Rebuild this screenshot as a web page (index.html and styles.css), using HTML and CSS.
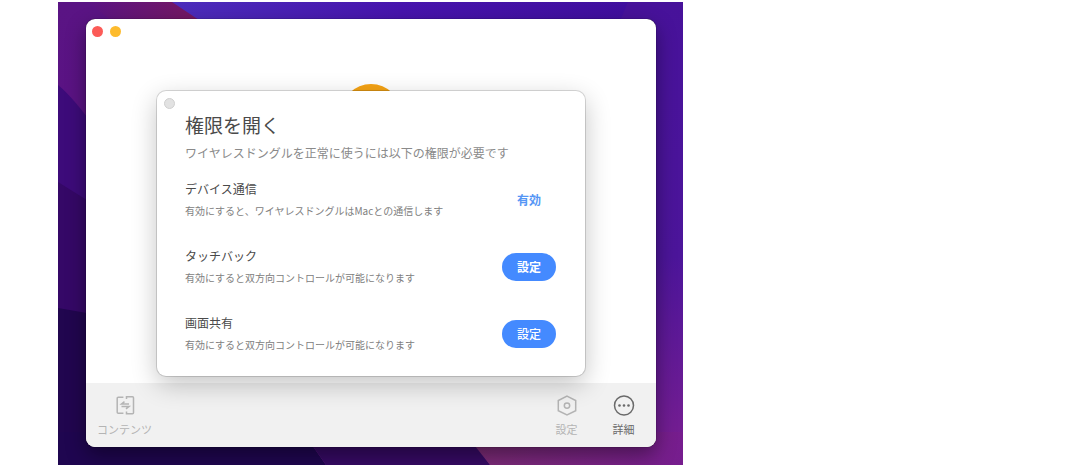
FILE: index.html
```html
<!DOCTYPE html>
<html lang="ja">
<head>
  <meta charset="UTF-8">
  <meta name="viewport" content="width=device-width, initial-scale=1.0">
  <title>権限を開く</title>
  <link rel="stylesheet" href="styles.css">
</head>
<body>
  <div class="desktop">
    <!-- Wallpaper -->
    <svg class="wallpaper" viewBox="0 0 625 463" preserveAspectRatio="none" aria-hidden="true">
      <defs>
        <linearGradient id="right" x1="0" y1="0" x2="0" y2="1">
          <stop offset="0" stop-color="#47129a"/>
          <stop offset="0.55" stop-color="#4c159a"/>
          <stop offset="1" stop-color="#7a1f90"/>
        </linearGradient>
        <linearGradient id="left" x1="0" y1="0" x2="0" y2="1">
          <stop offset="0" stop-color="#5a1484"/>
          <stop offset="1" stop-color="#5a0f80"/>
        </linearGradient>
        <linearGradient id="crimson" x1="0" y1="0" x2="1" y2="0">
          <stop offset="0" stop-color="#5a1484"/>
          <stop offset="1" stop-color="#78185e"/>
        </linearGradient>
        <linearGradient id="blue" x1="0" y1="0" x2="1" y2="0">
          <stop offset="0" stop-color="#4c2dbb"/>
          <stop offset="0.5" stop-color="#4714ad"/>
          <stop offset="1" stop-color="#400f9e"/>
        </linearGradient>
        <linearGradient id="pink" x1="0" y1="0" x2="1" y2="0">
          <stop offset="0" stop-color="#7c2c74"/>
          <stop offset="1" stop-color="#761d8e"/>
        </linearGradient>
      </defs>
      <rect width="625" height="463" fill="url(#right)"/>
      <path d="M0 0h160v463H0z" fill="url(#left)"/>
      <path d="M30 0h90l30 24H60z" fill="url(#crimson)"/>
      <path d="M114 0h456l-10 24H150z" fill="url(#blue)"/>
      <path d="M0 83Q16 96 40 130V463H0z" fill="#3d0b7a"/>
      <path d="M0 180L40 205V463H0z" fill="#350867"/>
      <path d="M0 306L40 313V463H0z" fill="#21064f"/>
      <path d="M0 430H245L268 463H0z" fill="#1f0650"/>
      <path d="M245 430H410L432 463H268z" fill="#360a64"/>
      <path d="M406 430H625V463H432z" fill="url(#pink)"/>
    </svg>

    <div class="window">
      <div class="titlebar">
        <button class="dot red" aria-label="閉じる"></button>
        <button class="dot yellow" aria-label="しまう"></button>
      </div>

      <main class="stage">
        <div class="avatar"></div>

        <section class="dialog">
          <button class="dot grey" aria-label="閉じる"></button>
          <h1>権限を開く</h1>
          <p class="lead">ワイヤレスドングルを正常に使うには以下の権限が必要です</p>

          <div class="permission">
            <div class="info">
              <h2>デバイス通信</h2>
              <p>有効にすると、ワイヤレスドングルはMacとの通信します</p>
            </div>
            <span class="status">有効</span>
          </div>
          <div class="permission">
            <div class="info">
              <h2>タッチバック</h2>
              <p>有効にすると双方向コントロールが可能になります</p>
            </div>
            <button class="set strong">設定</button>
          </div>
          <div class="permission">
            <div class="info">
              <h2>画面共有</h2>
              <p>有効にすると双方向コントロールが可能になります</p>
            </div>
            <button class="set">設定</button>
          </div>
        </section>
      </main>

      <footer class="toolbar">
        <button class="tool">
          <svg viewBox="0 0 20 20" aria-hidden="true">
            <path d="M8.4 2.2H3.2a1 1 0 0 0-1 1v14.1a1 1 0 0 0 1 1h5.2M11.5 4V1.8h6a1 1 0 0 1 1 1v15a1 1 0 0 1-1 1h-6v-2.2"/>
            <path d="M14 9H6.5l3-2.4M6.5 11.4H14l-3 2.4"/>
          </svg>
          コンテンツ
        </button>
        <button class="tool push">
          <svg viewBox="0 0 20 20" aria-hidden="true">
            <path d="M10 1.2l8.7 4.3v10.2L10 20l-8.7-4.3V5.5z"/>
            <circle cx="10" cy="10.6" r="2.7"/>
          </svg>
          設定
        </button>
        <button class="tool dark">
          <svg viewBox="0 0 20 20" aria-hidden="true">
            <circle cx="10" cy="10.5" r="9.5"/>
            <g class="solid">
              <circle cx="5.5" cy="10.5" r="1.3"/>
              <circle cx="10" cy="10.5" r="1.3"/>
              <circle cx="14.5" cy="10.5" r="1.3"/>
            </g>
          </svg>
          詳細
        </button>
      </footer>
    </div>
  </div>
</body>
</html>
```

FILE: styles.css
```css
* {
  box-sizing: border-box;
}
body {
  margin: 0;
  padding: 2px 58px;
  background: #fff;
  font-family: "Noto Sans CJK JP", sans-serif;
  color: #4a4a4a;
}
h1, h2, p {
  margin: 0;
  font-weight: 400;
}
button {
  padding: 0;
  border: 0;
  background: none;
  font-family: inherit;
}

.desktop {
  position: relative;
  max-width: 625px;
  padding: 17px 27px 18px 28px;
  overflow: hidden;
}
.wallpaper {
  position: absolute;
  inset: 0;
  width: 100%;
  height: 100%;
}

/* App window */
.window {
  position: relative;
  border-radius: 9px;
  background: #fff;
  box-shadow: 0 0 1px #000, 0 8px 20px rgba(0, 0, 0, 0.4);
}
.titlebar {
  display: flex;
  gap: 7px;
  padding: 7px 6px 0;
}
.dot {
  display: block;
  width: 11px;
  height: 11px;
  border-radius: 50%;
}
.red {
  background: #fc5b57;
}
.yellow {
  background: #fdbb2d;
}
.grey {
  border: 1px solid #d0d0d0;
  background: #e2e2e2;
}

/* Above the toolbar so the dialog shadow falls on it */
.stage {
  position: relative;
  z-index: 1;
  padding: 54px 16px 7px;
}
.avatar {
  position: absolute;
  top: 47px;
  left: 50%;
  width: 60px;
  height: 60px;
  margin-left: -30px;
  border-radius: 50%;
  background: #f5a314;
}

/* Permission dialog */
.dialog {
  position: relative;
  max-width: 428px;
  margin: 0 auto;
  padding: 7px 7px 9px;
  border-radius: 9px;
  background: #fff;
  box-shadow: 0 0 0 1px rgba(0, 0, 0, 0.14), 0 8px 26px rgba(0, 0, 0, 0.24);
}
.dialog h1 {
  margin: 2px 21px 0;
  font-size: 19px;
  line-height: 28px;
}
.lead {
  margin: 4px 21px 3px;
  font-size: 12px;
  line-height: 20px;
  color: #8a8a8a;
}
.permission {
  display: flex;
  align-items: center;
  justify-content: space-between;
  height: 67px;
  margin: 0 22px 0 21px;
}
.info h2 {
  margin-bottom: 4px;
  font-size: 12px;
  line-height: 18px;
}
.info p {
  font-size: 10px;
  line-height: 18px;
  color: #808080;
}
.status, .set {
  width: 54px;
  font-size: 12px;
  line-height: 28px;
  text-align: center;
}
.status {
  font-weight: 700;
  color: #5596f5;
}
.set {
  border-radius: 14px;
  background: #448aff;
  font-weight: 500;
  color: #fff;
}
.strong {
  font-weight: 700;
}

/* Bottom toolbar */
.toolbar {
  display: flex;
  padding: 12px 4px 10px 10px;
  border-radius: 0 0 9px 9px;
  background: #f1f1f1;
}
.tool {
  display: flex;
  flex-direction: column;
  align-items: center;
  gap: 6px;
  width: 57px;
  font-size: 11px;
  line-height: 16px;
  white-space: nowrap;
  color: #b4b4b4;
}
.tool svg {
  width: 20px;
  height: 20px;
  overflow: visible;
  fill: none;
  stroke: currentColor;
  stroke-width: 1.5;
}
.tool .solid {
  fill: currentColor;
  stroke: none;
}
.push {
  margin-left: auto;
}
.dark {
  color: #6a6a6a;
}
```
